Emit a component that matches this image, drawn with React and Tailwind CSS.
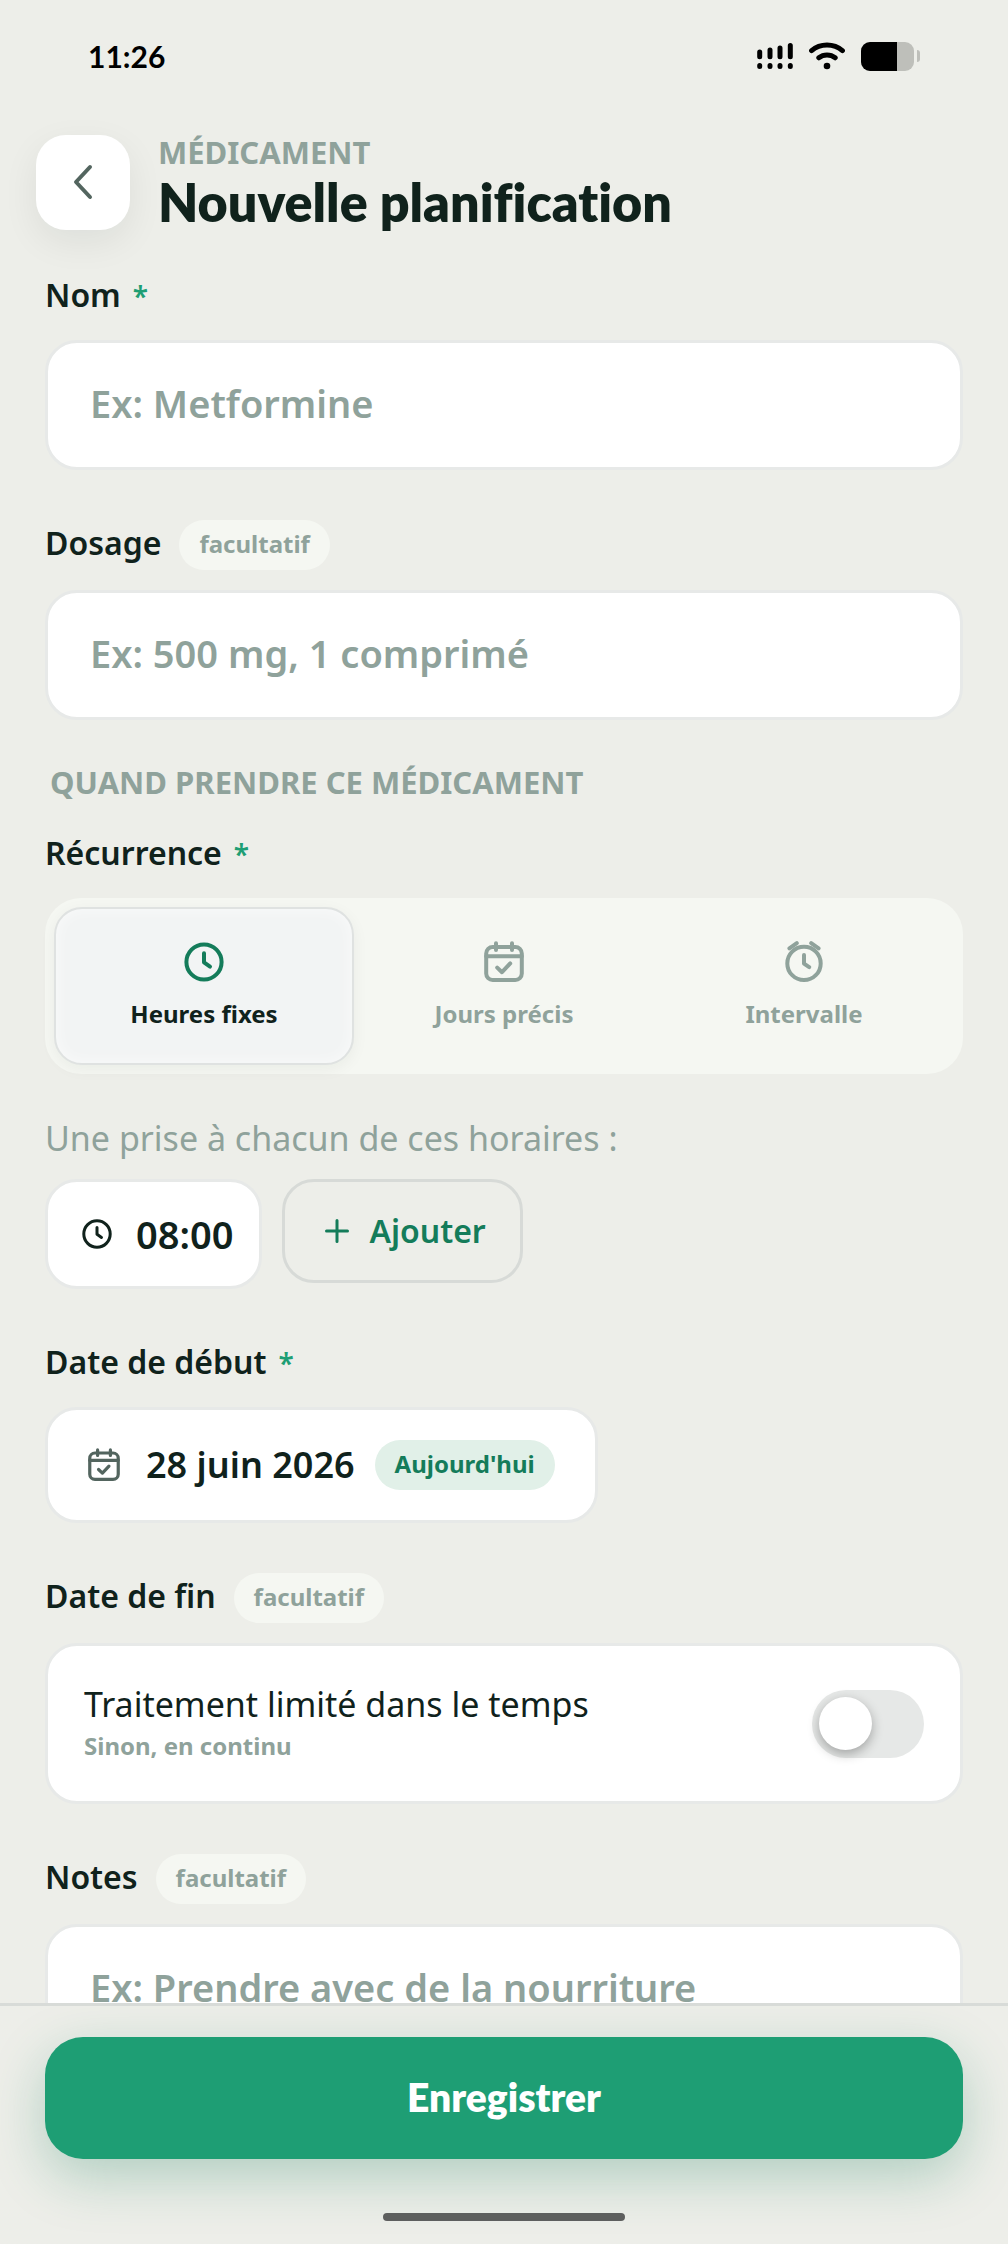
import React, { useState } from "react";

const ClockIcon = ({ className }) => (
  <svg viewBox="0 0 40 40" fill="none" stroke="currentColor" strokeWidth="4" strokeLinecap="round" strokeLinejoin="round" className={className} aria-hidden="true">
    <circle cx="20" cy="20" r="17.6" />
    <path d="M20 11.3v9l6 4.3" />
  </svg>
);

const CalendarIcon = ({ className }) => (
  <svg viewBox="0 0 40 42" fill="none" stroke="currentColor" strokeWidth="4" strokeLinecap="round" strokeLinejoin="round" className={className} aria-hidden="true">
    <rect x="2.2" y="6" width="35.6" height="33" rx="6.5" />
    <path d="M2.2 15.2h35.6M12 2.2V9M28 2.2V9M13.2 26.6l4.8 4.6 8.2-8.8" />
  </svg>
);

const AlarmIcon = ({ className }) => (
  <svg viewBox="0 0 40 42" fill="none" stroke="currentColor" strokeWidth="4" strokeLinecap="round" strokeLinejoin="round" className={className} aria-hidden="true">
    <circle cx="20" cy="22.4" r="16.7" />
    <path d="M5.4 7.4l7.4-5.2M34.6 7.4l-7.4-5.2M20 14v8.6l5.2 3.6" />
  </svg>
);

const StatusBar = () => (
  <div className="flex h-28 items-center justify-between px-[88px] text-black">
    <span className="font-['Lato',sans-serif] text-[30px] font-bold leading-10">11:26</span>

    <div className="flex items-center gap-4">
      <svg viewBox="0 0 36 28" className="h-7 w-9" stroke="currentColor" strokeWidth="5" strokeLinecap="round" aria-hidden="true">
        <path d="M2.7 10v4.8M13 8v6.8M23 6v8.8M33.3 3.5v11.3M2.7 23.4v1.2M13 23.4v1.2M23 23.4v1.2M33.3 23.4v1.2" />
      </svg>
      <svg viewBox="0 0 36 28" className="h-7 w-9" fill="none" stroke="currentColor" strokeWidth="5" strokeLinecap="round" aria-hidden="true">
        <path d="M2.6 8.6c8.6-7.4 22.2-7.4 30.8 0M9.8 15.8c4.8-3.8 11.6-3.8 16.4 0" />
        <circle cx="18" cy="24" r="3.3" fill="currentColor" stroke="none" />
      </svg>
      <div className="flex items-center gap-[3px]">
        <div className="h-[29px] w-[53px] overflow-hidden rounded-[9px] bg-[#bebfba]">
          <div className="h-full w-9 bg-black" />
        </div>
        <div className="h-3 w-[3px] rounded-r-full bg-[#bebfba]" />
      </div>
    </div>
  </div>
);

const Header = () => (
  <header className="flex items-center gap-7 px-9 pt-5">
    <button
      aria-label="Retour"
      className="flex h-[95px] w-[94px] shrink-0 items-center justify-center rounded-[30px] bg-white text-[#53655f] shadow-[0_12px_36px_rgba(16,34,28,0.07)]"
    >
      <svg viewBox="0 0 20 36" className="h-9 w-5" fill="none" stroke="currentColor" strokeWidth="4" strokeLinecap="round" strokeLinejoin="round" aria-hidden="true">
        <path d="M17 3L3 18l14 15" />
      </svg>
    </button>
    <div>
      <p className="text-[31px] font-bold uppercase leading-10 text-[#8fa29b]">Médicament</p>
      <h1 className="font-['Lato',sans-serif] text-[52px] font-extrabold leading-[60px] [font-variant-ligatures:none]">
        Nouvelle planification
      </h1>
    </div>
  </header>
);

const Label = ({ children, htmlFor, required, optional }) => (
  <div className="flex items-center gap-[18px]">
    <label htmlFor={htmlFor} className="pb-1 text-[32px] font-semibold leading-[42px]">
      {children}
      {required && <span className="ml-3 text-[28px] leading-none text-[#1e9e74]">*</span>}
    </label>
    {optional && (
      <span className="rounded-full bg-[#f5f7f2] px-5 pb-[9px] pt-[7px] text-2xl font-bold leading-[34px] text-[#8fa29b]">
        facultatif
      </span>
    )}
  </div>
);

const fieldStyle =
  "block w-full rounded-[32px] border-[3px] border-[#e7e9e8] bg-white px-[42px] text-[38px] font-semibold outline-none placeholder:text-[#8fa29b]";

const modes = [
  { id: "fixed", label: "Heures fixes", Icon: ClockIcon },
  { id: "days", label: "Jours précis", Icon: CalendarIcon },
  { id: "interval", label: "Intervalle", Icon: AlarmIcon },
];

const App = () => {
  const [mode, setMode] = useState("fixed");
  const [limited, setLimited] = useState(false);

  return (
    <div className="flex h-screen flex-col bg-[#edeee9] font-['Noto_Sans',sans-serif] text-[#10221c]">
      <StatusBar />
      <Header />

      <main className="min-h-0 flex-1 overflow-y-auto px-[45px] pt-[42px] [scrollbar-width:none]">
        <section className="flex flex-col gap-5">
          <Label htmlFor="name" required>Nom</Label>
          <input id="name" type="text" placeholder="Ex: Metformine" className={`${fieldStyle} h-[130px] pb-1`} />
        </section>

        <section className="mt-[50px] flex flex-col gap-5">
          <Label htmlFor="dosage" optional>Dosage</Label>
          <input id="dosage" type="text" placeholder="Ex: 500 mg, 1 comprimé" className={`${fieldStyle} h-[130px] pb-1`} />
        </section>

        <h2 className="mt-[42px] pl-[5px] text-[31px] font-bold uppercase leading-10 text-[#8fa29b]">
          Quand prendre ce médicament
        </h2>

        <section className="mt-[30px] flex flex-col gap-5">
          <Label required>Récurrence</Label>
          <div role="radiogroup" aria-label="Récurrence" className="grid grid-cols-3 rounded-[36px] bg-[#f5f7f2] p-[9px]">
            {modes.map(({ id, label, Icon }) => (
              <label
                key={id}
                className={`relative flex h-[158px] cursor-pointer flex-col items-center rounded-[28px] border-2 pt-8 ${
                  mode === id
                    ? "border-[#dfe2e1] bg-[#f2f4f4] shadow-[0_4px_16px_rgba(16,34,28,0.05),inset_0_0_16px_rgba(255,255,255,0.6)]"
                    : "border-transparent text-[#8fa29b]"
                }`}
              >
                <input
                  type="radio"
                  name="mode"
                  checked={mode === id}
                  onChange={() => setMode(id)}
                  className="sr-only"
                />
                <Icon className={mode === id ? "h-[42px] w-10 text-[#147c5a]" : "h-[42px] w-10"} />
                <span className="mt-[14px] text-2xl font-bold leading-[34px]">{label}</span>
              </label>
            ))}
          </div>
        </section>

        <p className="mt-[41px] text-[34px] leading-[46px] text-[#8fa29b]">Une prise à chacun de ces horaires :</p>
        <div className="mt-[18px] flex items-start gap-5">
          <button className="flex h-[110px] items-center gap-6 rounded-[32px] border-[3px] border-[#e7e9e8] bg-white pl-[34px] pr-[26px] text-[38px] font-semibold">
            <ClockIcon className="h-[30px] w-[30px]" />
            08:00
          </button>
          <button className="flex h-[104px] items-center gap-5 rounded-[32px] border-[3px] border-[#d7dad7] pl-10 pr-[34px] text-[32px] font-semibold text-[#147c5a]">
            <svg viewBox="0 0 24 24" className="h-6 w-6" stroke="currentColor" strokeWidth="3" strokeLinecap="round" aria-hidden="true">
              <path d="M12 1.5v21M1.5 12h21" />
            </svg>
            Ajouter
          </button>
        </div>

        <section className="mt-[52px] flex flex-col items-start gap-5">
          <Label htmlFor="start" required>Date de début</Label>
          <button id="start" className="flex h-[116px] items-center rounded-[32px] border-[3px] border-[#e7e9e8] bg-white pl-10 pr-10 text-[36px] font-semibold">
            <CalendarIcon className="h-[34px] w-8 text-[#53655f]" />
            <span className="ml-[26px]">28 juin 2026</span>
            <span className="ml-5 rounded-full bg-[#e1f0e8] px-5 pb-[9px] pt-[7px] text-2xl font-bold leading-[34px] text-[#147c5a]">
              Aujourd'hui
            </span>
          </button>
        </section>

        <section className="mt-[50px] flex flex-col gap-5">
          <Label htmlFor="limited" optional>Date de fin</Label>
          <div className="flex h-[161px] items-center justify-between rounded-[32px] border-[3px] border-[#e7e9e8] bg-white px-9">
            <div className="pb-1">
              <p className="text-[34px] leading-[46px]">Traitement limité dans le temps</p>
              <p className="pt-0.5 text-2xl font-bold leading-[34px] text-[#8fa29b]">Sinon, en continu</p>
            </div>
            <input
              id="limited"
              type="checkbox"
              role="switch"
              checked={limited}
              onChange={(e) => setLimited(e.target.checked)}
              className="flex h-[68px] w-28 cursor-pointer appearance-none items-center rounded-full bg-[#e6e8e7] px-[7px] before:h-[53px] before:w-[53px] before:rounded-full before:bg-white before:shadow-[0_4px_12px_rgba(0,0,0,0.3)] checked:justify-end checked:bg-[#1e9e74]"
            />
          </div>
        </section>

        <section className="mt-[50px] flex flex-col gap-5">
          <Label htmlFor="notes" optional>Notes</Label>
          <textarea id="notes" rows={4} placeholder="Ex: Prendre avec de la nourriture" className={`${fieldStyle} resize-none py-[34px] leading-[52px]`} />
        </section>
      </main>

      <footer className="shrink-0 overflow-hidden border-t-[3px] border-[#d8dbd8] px-[45px] pb-[23px] pt-[31px]">
        <button className="h-[122px] w-full rounded-[38px] bg-[#1e9e74] pb-0.5 font-['Lato',sans-serif] text-[39px] font-extrabold text-white shadow-[0_18px_54px_rgba(20,124,90,0.28)]">
          Enregistrer
        </button>
        <div className="mx-auto mt-[54px] h-2 w-[242px] rounded-full bg-[#5f5f5f]" />
      </footer>
    </div>
  );
};

export default App;
